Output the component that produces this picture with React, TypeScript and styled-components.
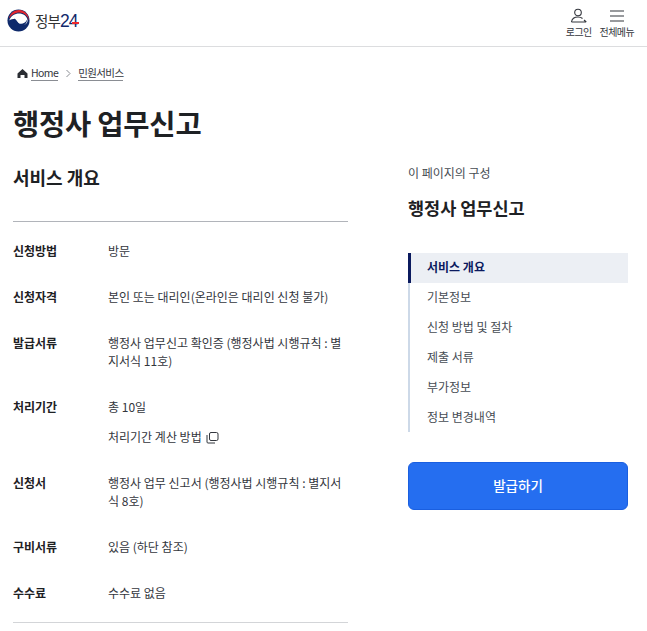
import React from "react";
import styled, { createGlobalStyle } from "styled-components";

const Global = createGlobalStyle`
  html, body { margin: 0; padding: 0; background: #fff; }
  body { font-family: "Noto Sans CJK KR", "Noto Sans", sans-serif; color: #1e2124; overflow: hidden; height: 631px; }
  * { box-sizing: border-box; }
`;

const Header = styled.header`
  height: 47px;
  border-bottom: 1px solid #dcdddf;
  display: flex;
  align-items: flex-start;
  justify-content: space-between;
  padding: 9px 13px 0 7px;
`;
const Logo = styled.div`
  display: flex;
  align-items: center;
  gap: 5px;
`;
const LogoWord = styled.span`
  font-size: 14.500px;
  line-height: 20px;
  color: #333;
  letter-spacing: -0.8px;
`;
const LogoNum = styled.span`
  font-family: "Liberation Sans", sans-serif;
  font-size: 17.500px;
  line-height: 20px;
  letter-spacing: -1.1px;
  color: #12296b;
  margin-left: -5px;
`;
const LogoBar = styled.svg`
  margin: 4px 0 0 -10px;
  position: relative;
`;
const Actions = styled.div`
  display: flex;
  gap: 8px;
  margin-top: -1px;
`;
const Action = styled.div`
  display: flex;
  flex-direction: column;
  align-items: center;
  font-size: 10px;
  line-height: 14px;
  color: #33363d;
  letter-spacing: -0.6px;
  gap: 1px;
`;
const Main = styled.main`
  display: grid;
  grid-template-columns: 335px 220px;
  column-gap: 60px;
  padding: 0 19px 0 13px;
`;
const Crumbs = styled.nav`
  display: flex;
  align-items: center;
  height: 52px;
  padding: 1px 0 0 4px;
  color: #33363d;
`;
const CrumbLink = styled.span`
  border-bottom: 1px solid #8a8d93;
  font-size: 10.500px;
  line-height: 14px;
  letter-spacing: -0.6px;
`;
const HomeIcon = styled.svg`
  margin-right: 3px;
`;
const CrumbArrow = styled.svg`
  margin: 0 6px 0 7px;
`;
const Title = styled.h1`
  margin: 0;
  padding-top: 4px;
  font-size: 28.500px;
  line-height: 40px;
  height: 67px;
  font-weight: 700;
  color: #1e2124;
  letter-spacing: -0.2px;
`;
const Section = styled.h2`
  margin: 0;
  font-size: 18px;
  line-height: 26px;
  font-weight: 700;
  height: 56px;
  margin-top: -2px;
  color: #1e2124;
`;
const Dl = styled.dl`
  margin: 0;
  padding: 20px 0 20px;
  border-top: 1px solid #b1b4ba;
  border-bottom: 1px solid #d3d5d8;
  margin-top: 1px;
  display: flex;
  flex-direction: column;
  gap: 28px;
`;
const Row = styled.div`
  display: grid;
  grid-template-columns: 95px 1fr;
  font-size: 12px;
  line-height: 18px;
`;
const Dt = styled.dt`
  font-weight: 700;
  color: #1e2124;
`;
const Dd = styled.dd`
  margin: 0;
  color: #33363d;
`;
const SubLine = styled.div`
  margin-top: 12px;
  display: flex;
  align-items: center;
  gap: 4px;
`;
const Side = styled.aside`
  padding-top: 117px;
`;
const Kicker = styled.div`
  font-size: 12px;
  line-height: 18px;
  color: #464c53;
`;
const SideTitle = styled.div`
  margin-top: 13px;
  font-size: 17.500px;
  line-height: 26px;
  font-weight: 700;
`;
const Toc = styled.ul`
  list-style: none;
  margin: 32px 0 0;
  padding: 0;
  height: 179px;
  border-left: 2px solid #cdd9e8;
`;
const TocItem = styled.li<{ $active?: boolean }>`
  height: 30px;
  line-height: 28px;
  font-size: 12px;
  padding-left: ${(p) => (p.$active ? "16px" : "17px")};
  margin-left: ${(p) => (p.$active ? "-2px" : "0")};
  border-left: ${(p) => (p.$active ? "3px solid #0b1a5e" : "none")};
  background: ${(p) => (p.$active ? "#eceff4" : "transparent")};
  color: ${(p) => (p.$active ? "#0b1a5e" : "#464c53")};
  font-weight: ${(p) => (p.$active ? 700 : 400)};
`;
const Issue = styled.button`
  display: block;
  width: 100%;
  height: 48px;
  margin-top: 30px;
  padding: 0 0 3px;
  border: 1px solid #1a5fe0;
  border-radius: 6px;
  background: #256ef0;
  color: #fff;
  font: 500 13.500px/20px "Noto Sans CJK KR", sans-serif;
`;

const rows: { k: string; v: React.ReactNode }[] = [
  { k: "신청방법", v: "방문" },
  { k: "신청자격", v: "본인 또는 대리인(온라인은 대리인 신청 불가)" },
  { k: "발급서류", v: "행정사 업무신고 확인증 (행정사법 시행규칙 : 별지서식 11호)" },
  {
    k: "처리기간",
    v: (
      <>
        총 10일
        <SubLine>
          처리기간 계산 방법
          <svg width="13" height="13" viewBox="0 0 13 13" fill="none" stroke="#33363d" strokeWidth="1">
            <rect x="3.500" y="1.500" width="8.500" height="8" rx="1.500" />
            <path d="M1 4v7a1 1 0 0 0 1 1h7" />
          </svg>
        </SubLine>
      </>
    ),
  },
  { k: "신청서", v: "행정사 업무 신고서 (행정사법 시행규칙 : 별지서식 8호)" },
  { k: "구비서류", v: "있음 (하단 참조)" },
  { k: "수수료", v: "수수료 없음" },
];

const toc = ["서비스 개요", "기본정보", "신청 방법 및 절차", "제출 서류", "부가정보", "정보 변경내역"];

export default function App() {
  return (
    <>
      <Global />
      <Header>
        <Logo>
          <svg width="23" height="23" viewBox="0 0 24 24">
            <circle cx="12" cy="12" r="11.500" fill="#0f2a6b" />
            <path d="M2 10C3 4 8 .8 13 1c5.500.4 10 5 10 11-1-4-4-7.500-8.500-8.200C9 3.200 5 6 2 10Z" fill="#e3262e" />
            <path d="M2.300 12C4 6.500 10 3.800 15 5c4 1 6.500 4 6.500 7.500-.5 3-3.500 4.500-6.500 4-4-.5-4.500-5-7.500-6-2-.5-4 .5-5.200 1.500Z" fill="#fff" />
            <path d="M7.500 10c2.500 1 3 4 5 5 3 1.200 6.500 0 8.500-4-.2 4.500-4 7.500-8 7.500-4.500 0-7-4.500-5.500-8.500Z" fill="#0f2a6b" />
          </svg>
          <LogoWord>정부</LogoWord>
          <LogoNum>24</LogoNum>
          <LogoBar width="7" height="9" viewBox="0 0 7 9">
            <rect x="0" y="4" width="7" height="2" fill="#f0282d" />
          </LogoBar>
        </Logo>
        <Actions>
          <Action>
            <svg width="18" height="16" viewBox="0 0 18 16" fill="none" stroke="#33363d" strokeWidth="1.100">
              <circle cx="8" cy="4.500" r="3.300" />
              <path d="M1.500 14c.5-3.500 3-5 6.500-5 2 0 3.500.5 4.500 1.500" />
              <path d="M1.500 14H16M14 12l2.300 2" />
            </svg>
            로그인
          </Action>
          <Action>
            <svg width="16" height="16" viewBox="0 0 16 16" fill="none" stroke="#33363d" strokeWidth="1.200">
              <path d="M1 3h14M1 8h14M1 13h14" />
            </svg>
            전체메뉴
          </Action>
        </Actions>
      </Header>
      <Main>
        <div>
          <Crumbs>
            <HomeIcon width="11" height="11" viewBox="0 0 11 11" fill="#2a2d33">
              <path d="M5.500 1 .5 5.500V10h3V7h4v3h3V5.500Z" />
            </HomeIcon>
            <CrumbLink>Home</CrumbLink>
            <CrumbArrow width="7" height="9" viewBox="0 0 7 9" fill="none" stroke="#8a8d93">
              <path d="m1.500 1 3.500 3.500L1.500 8" />
            </CrumbArrow>
            <CrumbLink>민원서비스</CrumbLink>
          </Crumbs>
          <Title>행정사 업무신고</Title>
          <Section>서비스 개요</Section>
          <Dl>
            {rows.map((r) => (
              <Row key={r.k}>
                <Dt>{r.k}</Dt>
                <Dd>{r.v}</Dd>
              </Row>
            ))}
          </Dl>
        </div>
        <Side>
          <Kicker>이 페이지의 구성</Kicker>
          <SideTitle>행정사 업무신고</SideTitle>
          <Toc>
            {toc.map((t, i) => (
              <TocItem key={t} $active={i === 0}>{t}</TocItem>
            ))}
          </Toc>
          <Issue>발급하기</Issue>
        </Side>
      </Main>
    </>
  );
}
